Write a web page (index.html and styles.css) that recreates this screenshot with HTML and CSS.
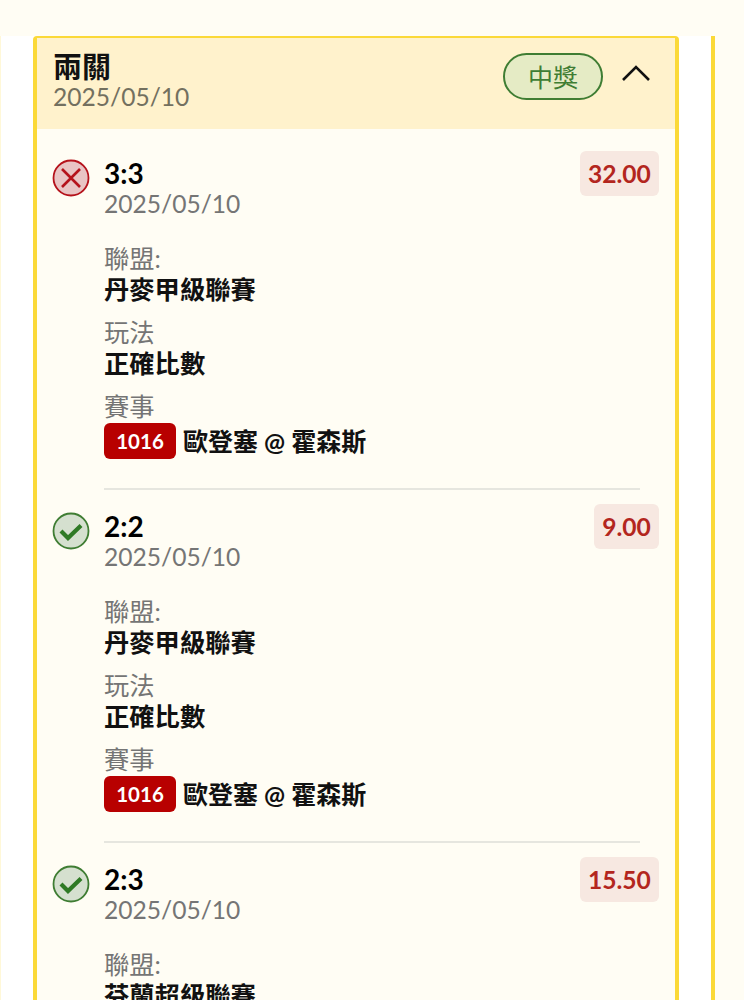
FILE: index.html
```html
<!DOCTYPE html>
<html lang="zh-Hant">
<head>
  <meta charset="UTF-8">
  <meta name="viewport" content="width=device-width, initial-scale=1.0">
  <title>兩關</title>
  <link rel="stylesheet" href="styles.css">
</head>
<body>

<div class="top-strip"></div>

<div class="track">
  <div class="peek peek-left"></div>

  <div class="card">
    <div class="card-head">
      <div class="head-text">
        <div class="head-title">兩關</div>
        <div class="head-date">2025/05/10</div>
      </div>
      <span class="win-pill">中獎</span>
      <svg class="chevron" width="30" height="18" viewBox="0 0 30 18">
        <path d="M2 16 L15 3 L28 16" fill="none" stroke="#111" stroke-width="2.6"/>
      </svg>
    </div>

    <div class="leg">
      <svg class="status" width="38" height="38" viewBox="0 0 38 38">
        <circle cx="19" cy="19" r="17.5" fill="#e9c4c4" stroke="#b5121b" stroke-width="1.8"/>
        <path d="M10 10 L28 28 M28 10 L10 28" fill="none" stroke="#b5121b" stroke-width="2.6"/>
      </svg>
      <div class="leg-body">
        <div class="leg-top">
          <div>
            <div class="score">3:3</div>
            <div class="leg-date">2025/05/10</div>
          </div>
          <span class="odds">32.00</span>
        </div>
        <div class="field first">
          <div class="field-label">聯盟:</div>
          <div class="field-value">丹麥甲級聯賽</div>
        </div>
        <div class="field">
          <div class="field-label">玩法</div>
          <div class="field-value">正確比數</div>
        </div>
        <div class="field">
          <div class="field-label">賽事</div>
          <div class="match"><span class="match-no">1016</span><span class="match-name">歐登塞 @ 霍森斯</span></div>
        </div>
      </div>
    </div>

    <div class="leg">
      <svg class="status" width="38" height="38" viewBox="0 0 38 38">
        <circle cx="19" cy="19" r="17.5" fill="#d5e0cf" stroke="#3f7d33" stroke-width="1.8"/>
        <path d="M9 19 L16 26 L29 13.5" fill="none" stroke="#2f7a25" stroke-width="4.2"/>
      </svg>
      <div class="leg-body">
        <div class="leg-top">
          <div>
            <div class="score">2:2</div>
            <div class="leg-date">2025/05/10</div>
          </div>
          <span class="odds">9.00</span>
        </div>
        <div class="field first">
          <div class="field-label">聯盟:</div>
          <div class="field-value">丹麥甲級聯賽</div>
        </div>
        <div class="field">
          <div class="field-label">玩法</div>
          <div class="field-value">正確比數</div>
        </div>
        <div class="field">
          <div class="field-label">賽事</div>
          <div class="match"><span class="match-no">1016</span><span class="match-name">歐登塞 @ 霍森斯</span></div>
        </div>
      </div>
    </div>

    <div class="leg">
      <svg class="status" width="38" height="38" viewBox="0 0 38 38">
        <circle cx="19" cy="19" r="17.5" fill="#d5e0cf" stroke="#3f7d33" stroke-width="1.8"/>
        <path d="M9 19 L16 26 L29 13.5" fill="none" stroke="#2f7a25" stroke-width="4.2"/>
      </svg>
      <div class="leg-body">
        <div class="leg-top">
          <div>
            <div class="score">2:3</div>
            <div class="leg-date">2025/05/10</div>
          </div>
          <span class="odds">15.50</span>
        </div>
        <div class="field first">
          <div class="field-label">聯盟:</div>
          <div class="field-value">芬蘭超級聯賽</div>
        </div>
      </div>
    </div>
  </div>

  <div class="peek peek-right"></div>
</div>

</body>
</html>
```

FILE: styles.css
```css
html, body {
  margin: 0;
  padding: 0;
  height: 1000px;
  overflow: hidden;
}
body {
  font-family: Lato, "Noto Sans CJK TC", sans-serif;
  background-color: #fffdf4;
  color: #000;
}
.top-strip {
  height: 36px;
  background-color: #fffdf4;
}
.track {
  display: flex;
  align-items: flex-start;
  height: 964px;
  background-color: #fff;
}
.peek {
  height: 964px;
  box-sizing: border-box;
  background-color: #fffdf4;
}
.peek-left {
  width: 1px;
  flex: none;
  background-color: #fff8d8;
}
.peek-right {
  flex: 1;
  margin-left: 32px;
  border-left: 4px solid #fbd938;
}
.card {
  width: 646px;
  flex: none;
  margin-left: 32px;
  box-sizing: border-box;
  height: 964px;
  overflow: hidden;
  background-color: #fffdf4;
  border: 4px solid #fbd938;
  border-bottom: none;
  border-top-width: 2px;
  border-radius: 4px 4px 0 0;
}
.card-head {
  display: flex;
  align-items: flex-start;
  box-sizing: border-box;
  height: 91px;
  padding: 14px 24px 0 16px;
  background-color: #fff2cc;
}
.head-text {
  flex: 1;
}
.head-title {
  font-size: 29px;
  font-weight: 700;
  line-height: 30px;
  color: #111;
}
.head-date {
  font-size: 24.6px;
  line-height: 30px;
  color: #73705f;
}
.win-pill {
  box-sizing: border-box;
  width: 100px;
  height: 47px;
  margin-top: 1px;
  line-height: 45px;
  text-align: center;
  font-size: 25px;
  color: #3f7d33;
  background-color: #e5ebc5;
  border: 2px solid #3f7d33;
  border-radius: 24px;
}
.chevron {
  margin-left: 18px;
  margin-top: 12px;
}
.leg {
  display: flex;
  padding: 22px 16px 0 15px;
}
.leg + .leg {
  padding-top: 14px;
}
.status {
  flex: none;
  margin-top: 8px;
}
.leg-body {
  flex: 1;
  margin-left: 14px;
  padding-bottom: 31px;
}
.leg:not(:last-child) .leg-body {
  background-image: linear-gradient(#e6e6df, #e6e6df);
  background-repeat: no-repeat;
  background-size: 536px 2px;
  background-position: left bottom;
}
.leg-top {
  display: flex;
  justify-content: space-between;
  align-items: flex-start;
}
.score {
  font-size: 28px;
  font-weight: 700;
  line-height: 30px;
  margin-top: 7px;
  margin-bottom: 1px;
}
.leg-date {
  font-size: 24.6px;
  line-height: 30px;
  color: #757575;
}
.odds {
  font-size: 24.6px;
  font-weight: 700;
  line-height: 45px;
  padding: 0 8.2px;
  color: #b3261e;
  background-color: #f7e8e1;
  border-radius: 6px;
}
.field {
  margin-top: 13px;
}
.field.first {
  margin-top: 24px;
}
.field-label {
  font-size: 25.3px;
  line-height: 31px;
  color: #757575;
}
.field-value {
  font-size: 25.3px;
  font-weight: 700;
  line-height: 30px;
  color: #111;
}
.match {
  display: flex;
  align-items: center;
  gap: 7px;
  margin-top: 1px;
}
.match-no {
  width: 72px;
  height: 36px;
  line-height: 36px;
  text-align: center;
  font-size: 20.5px;
  font-weight: 700;
  color: #fff;
  background-color: #b80000;
  border-radius: 6px;
}
.match-name {
  font-size: 25px;
  font-weight: 700;
  line-height: 30px;
  color: #111;
}
```
